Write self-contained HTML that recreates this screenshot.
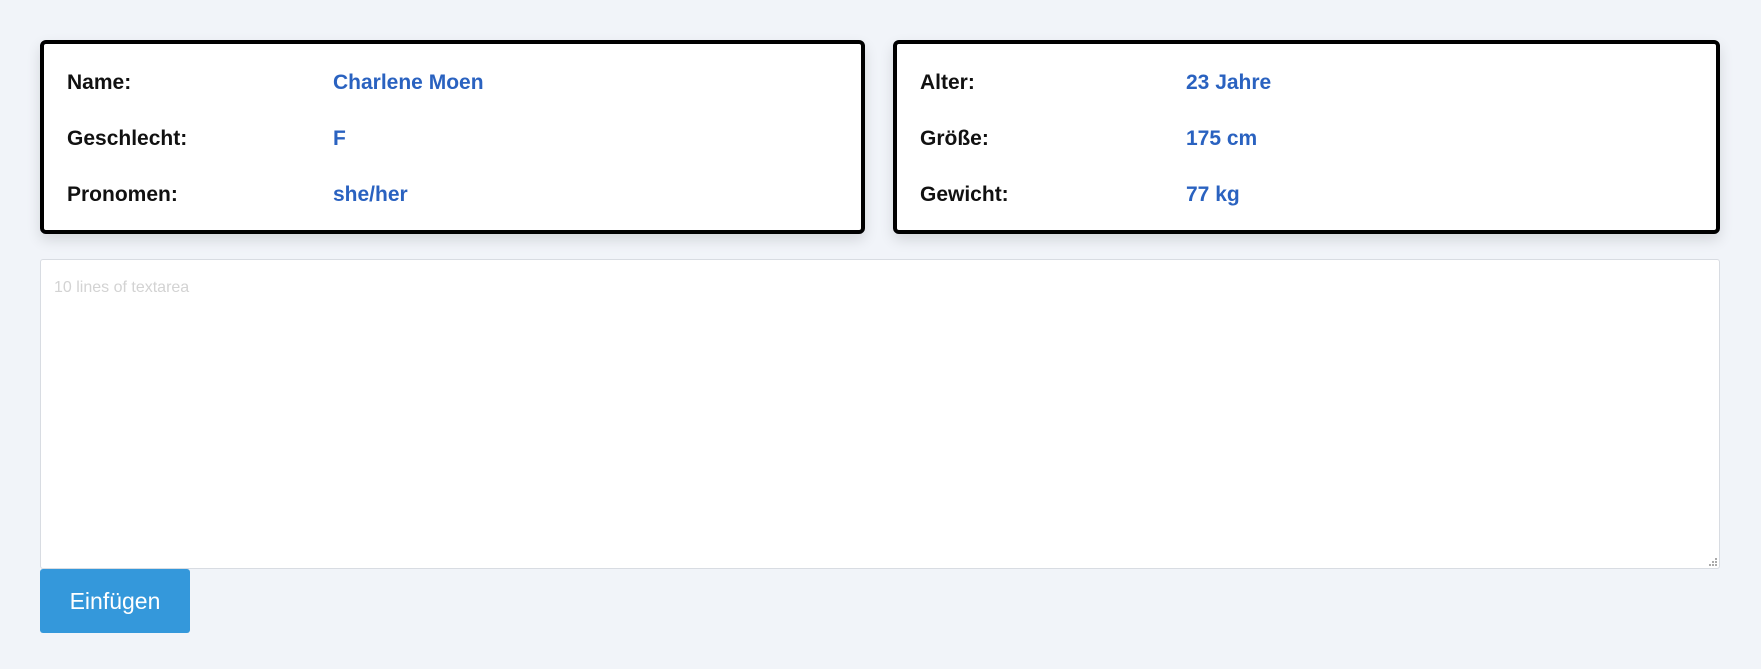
<!DOCTYPE html>
<html><head><style>
body{margin:0;background:#f1f4f9;width:1761px;height:669px;overflow:hidden;font-family:"Liberation Sans",sans-serif;}
.card{position:absolute;top:40px;height:194px;background:#fff;border:4px solid #000;border-radius:6px;box-shadow:0 6px 14px rgba(0,0,0,0.12);box-sizing:border-box;}
.row{position:absolute;font-size:21px;font-weight:bold;line-height:28px;}
.l{color:#111;}
.v{color:#2a62c0;}
.ta{position:absolute;left:40px;top:259px;width:1680px;height:310px;background:#fff;border:1px solid #d8dce2;border-radius:3px;box-sizing:border-box;}
.ph{position:absolute;left:13px;top:19px;font-size:16px;color:#d3d3d3;}
.btn{position:absolute;left:40px;top:569px;width:150px;height:64px;background:#3498db;border-radius:3px;color:#fff;font-size:23px;line-height:64px;text-align:center;}
</style></head><body>
<div class="card" style="left:40px;width:825px;">
<div class="row l" style="left:23px;top:25px">Name:</div><div class="row v" style="left:289px;top:25px">Charlene Moen</div>
<div class="row l" style="left:23px;top:81px">Geschlecht:</div><div class="row v" style="left:289px;top:81px">F</div>
<div class="row l" style="left:23px;top:137px">Pronomen:</div><div class="row v" style="left:289px;top:137px">she/her</div>
</div>
<div class="card" style="left:893px;width:827px;">
<div class="row l" style="left:23px;top:25px">Alter:</div><div class="row v" style="left:289px;top:25px">23 Jahre</div>
<div class="row l" style="left:23px;top:81px">Größe:</div><div class="row v" style="left:289px;top:81px">175 cm</div>
<div class="row l" style="left:23px;top:137px">Gewicht:</div><div class="row v" style="left:289px;top:137px">77 kg</div>
</div>
<div class="ta"><div class="ph">10 lines of textarea</div>
<svg style="position:absolute;right:2px;bottom:2px" width="10" height="10"><g fill="#aaa"><rect x="8" y="2" width="2" height="2"/><rect x="5" y="5" width="2" height="2"/><rect x="8" y="5" width="2" height="2"/><rect x="2" y="8" width="2" height="2"/><rect x="5" y="8" width="2" height="2"/><rect x="8" y="8" width="2" height="2"/></g></svg>
</div>
<div class="btn">Einfügen</div>
</body></html>
